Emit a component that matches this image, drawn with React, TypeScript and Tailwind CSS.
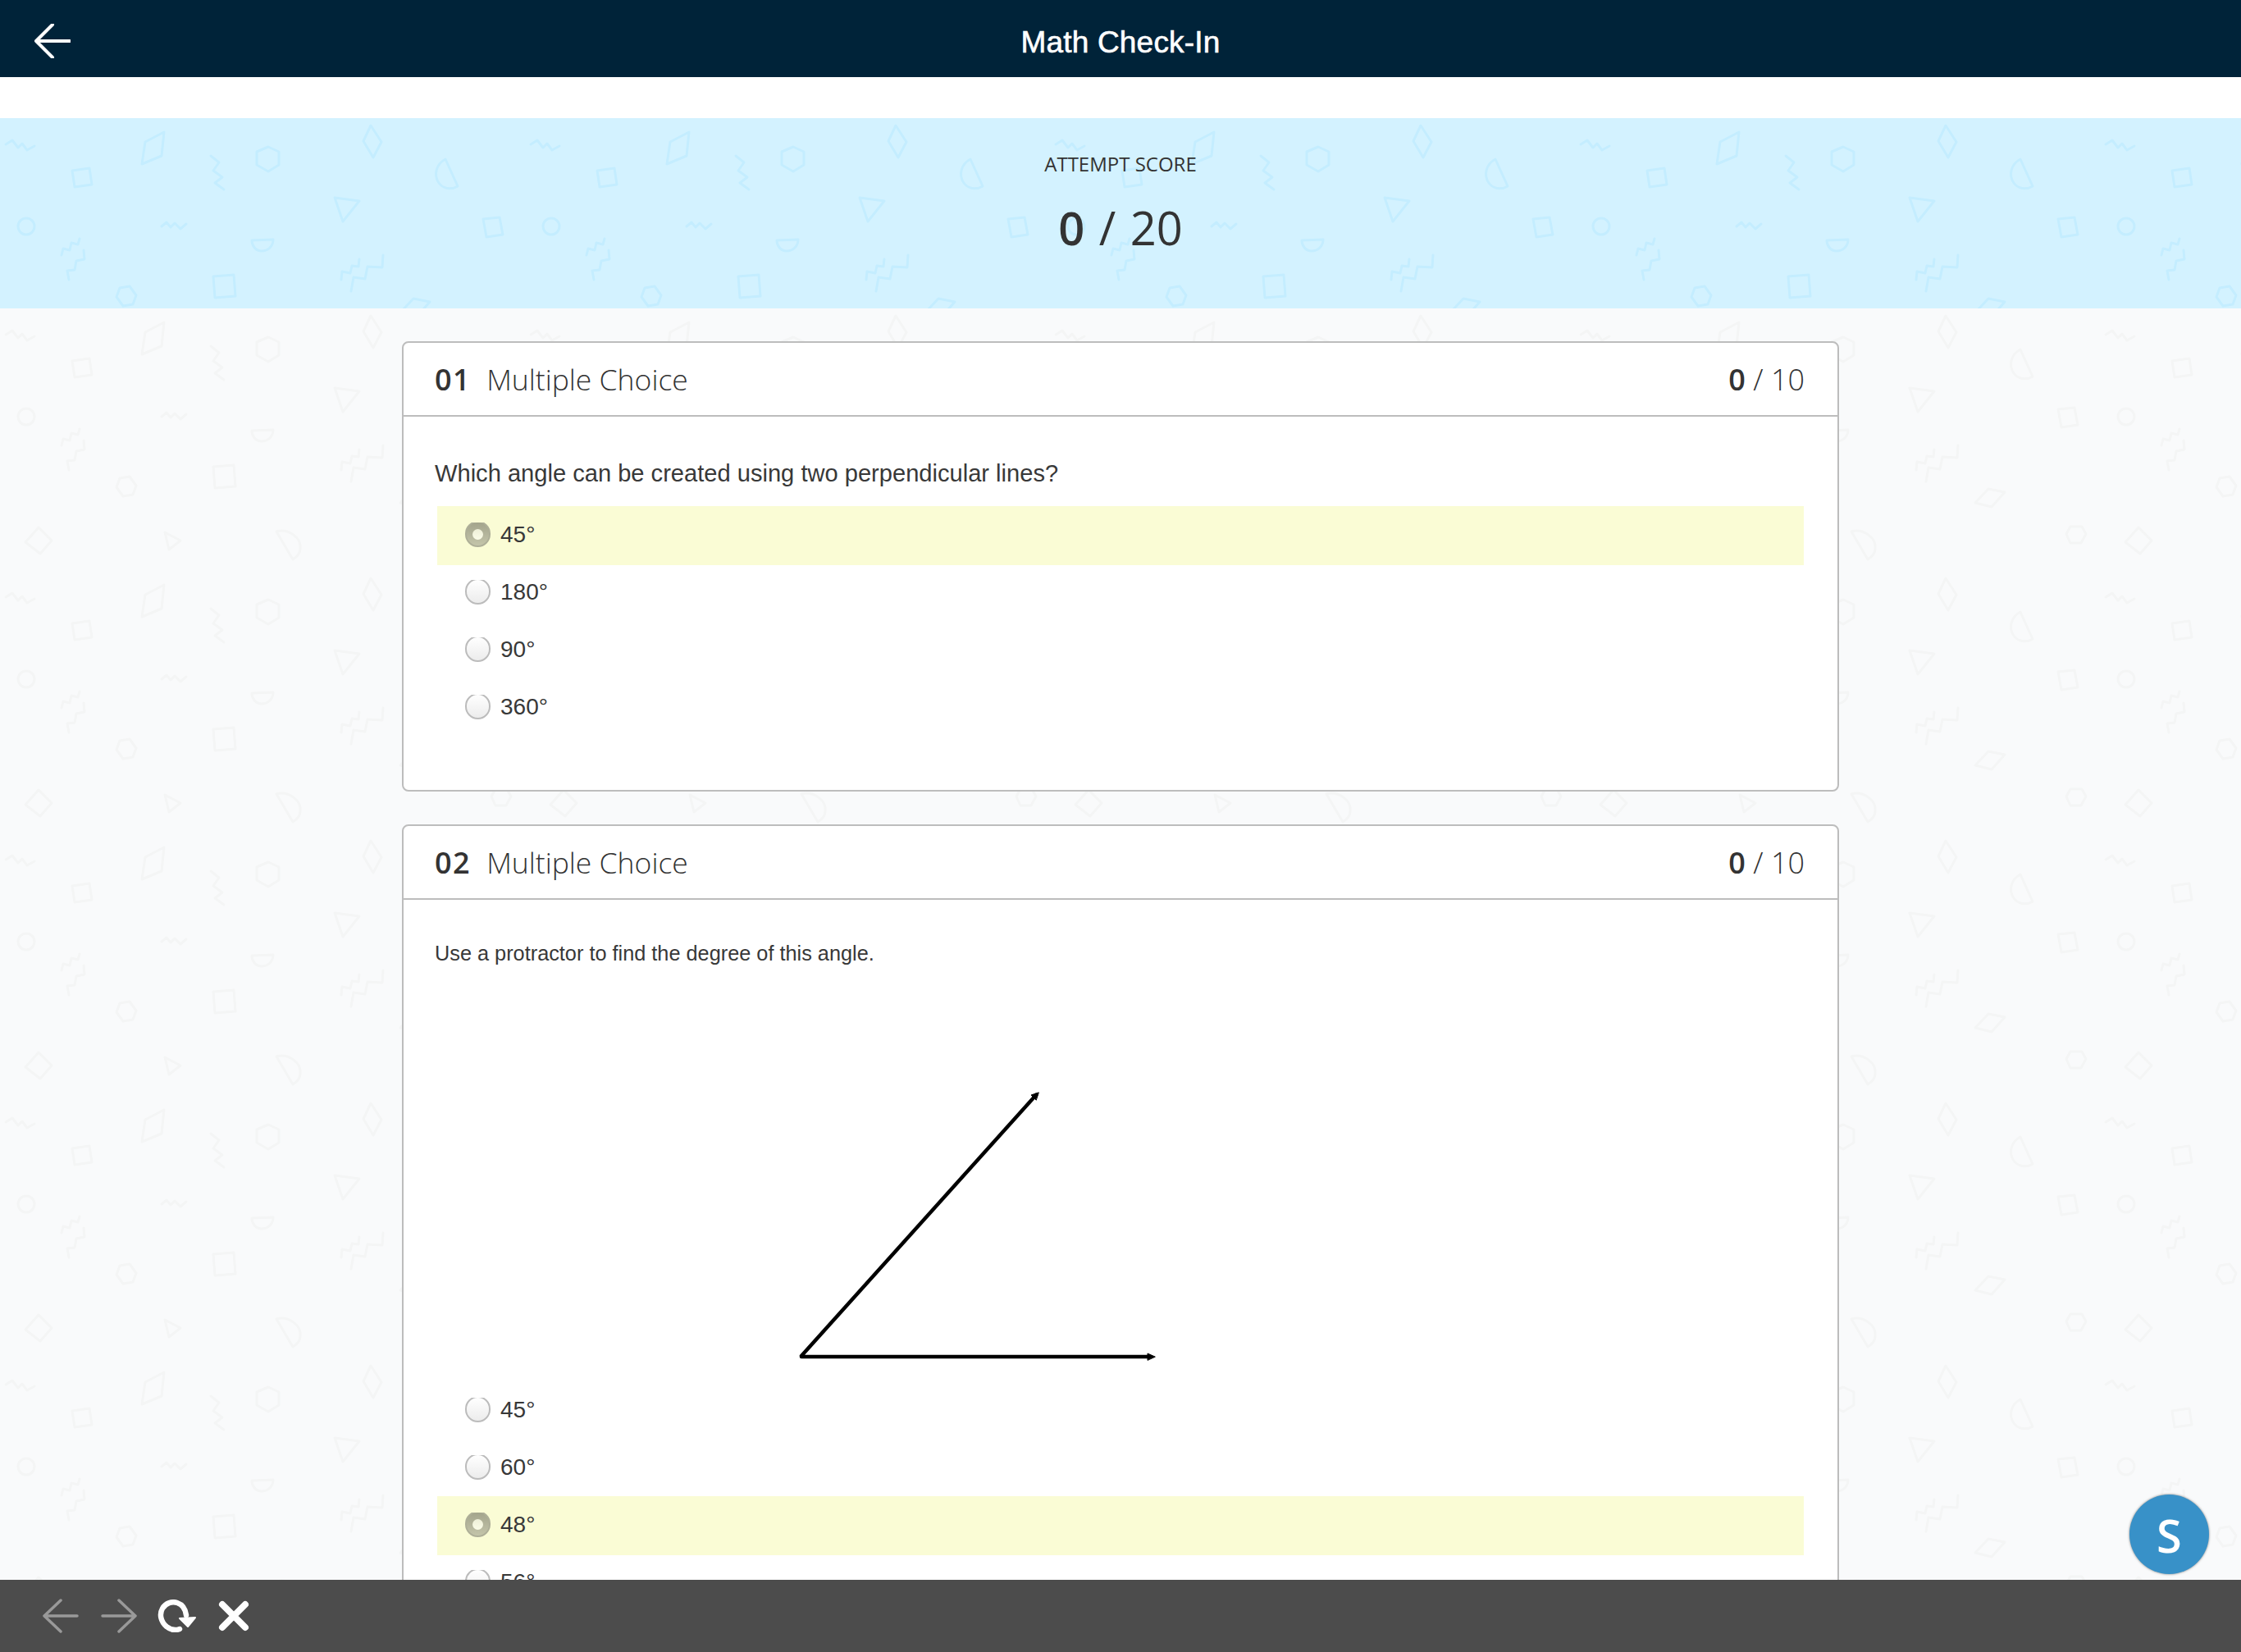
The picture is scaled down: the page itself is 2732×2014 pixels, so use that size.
import React from "react";

const openSans = "font-['Open_Sans',sans-serif]";
const liberation = "font-['Liberation_Sans',Arial,sans-serif]";

const Confetti: React.FC<{ id: string; color: string }> = ({ id, color }) => (
  <svg className="absolute inset-0 w-full h-full" aria-hidden="true">
    <defs>
      <pattern id={id} width="640" height="320" patternUnits="userSpaceOnUse">
        <g fill="none" stroke={color} strokeWidth="3" strokeLinejoin="round" strokeLinecap="round">
          <polyline points="7,32 15,27 22,36 27,31 33,39 42,34" />
          <polygon points="177,29 200,17 197,46 173,56" />
          <polygon points="88,64 109,61 112,81 91,84" />
          <polyline points="257,46 267,54 260,64 271,72 262,79 273,87" />
          <polygon points="327,35 340,41 340,57 327,65 313,57 313,41" />
          <polygon points="452,9 465,29 455,48 443,28" />
          <polygon points="408,97 438,101 418,126" />
          <circle cx="32" cy="132" r="10" />
          <polyline points="197,132 203,127 208,133 213,128 220,135 227,129" />
          <path d="M307 149 L333 148 C333 156 327 162 319 162 C312 162 307 156 307 149 Z" />
          <polyline points="75,167 77,159 85,161 87,152 95,154 97,147" />
          <polyline points="102,161 103,172 93,174 91,185 82,186 84,197" />
          <polygon points="158,205 166,216 162,227 150,229 142,218 146,207" />
          <polygon points="260,193 285,191 287,217 262,219" />
          <polyline points="416,197 417,187 427,189 429,180 437,181 438,172" />
          <polyline points="467,167 466,182 448,181 445,196 431,194 428,211" />
          <polygon points="47,267 63,283 49,299 31,285" />
          <polygon points="201,273 220,283 206,294" />
          <path d="M337 272 C352 268 368 280 366 293 C366 298 362 303 357 306 Z" />
          <path d="M543 50 L558 83 C550 88 540 86 535 79 C528 69 532 56 543 50 Z" />
          <polygon points="589,123 609,121 613,142 593,145" />
          <polygon points="504,220 524,224 508,242 488,237" />
          <polygon points="604,266 618,266 623,275 617,286 604,286 599,275" />
        </g>
      </pattern>
    </defs>
    <rect width="100%" height="100%" fill={`url(#${id})`} />
  </svg>
);

const Radio: React.FC<{ checked?: boolean }> = ({ checked }) => (
  <span className="block w-[31px] h-[30px] overflow-hidden shrink-0">
    {checked ? (
      <span className="flex items-center justify-center w-[31px] h-[32px] -mt-[2px] rounded-full bg-linear-to-b from-[#a3a48c] to-[#c4c5aa] border-2 border-[#aeaf98]">
        <span className="block w-[13px] h-[13px] rounded-full bg-linear-to-b from-[#eeefd8] to-[#fbfce8]" />
      </span>
    ) : (
      <span className="block w-[31px] h-[32px] -mt-[2px] rounded-full bg-linear-to-b from-white to-[#ececec] border-2 border-[#bcbcbc]" />
    )}
  </span>
);

const Option: React.FC<{ label: string; checked?: boolean }> = ({ label, checked }) => (
  <div
    className={
      checked
        ? "flex items-center gap-[12px] h-[72px] -mb-[2px] pb-[2px] ml-[3px] pl-[34px] bg-[#fafcd5]"
        : "flex items-center gap-[12px] h-[70px] ml-[3px] pl-[34px]"
    }
  >
    <Radio checked={checked} />
    <span className={`${liberation} text-[28px] leading-none text-[#383838]`}>{label}</span>
  </div>
);

const QuestionCard: React.FC<{ num: string; children: React.ReactNode }> = ({ num, children }) => (
  <section className="w-[1752px] mx-auto mb-[40px] bg-white border-2 border-[#bdbdbd] rounded-[8px]">
    <div className={`${openSans} flex items-center justify-between h-[90px] pt-[2px] pl-[38px] pr-[40px] border-b-2 border-[#bdbdbd] text-[36px] text-[#333]`}>
      <div className="flex items-center">
        <span className="font-semibold tracking-[1.5px]">{num}</span>
        <span className="ml-[19px] text-[35.5px] font-light">Multiple Choice</span>
      </div>
      <div>
        <span className="font-semibold">0</span>
        <span className="font-light"> / 10</span>
      </div>
    </div>
    <div className="pl-[38px] pr-[41px]">{children}</div>
  </section>
);

const ArrowIcon: React.FC<{ flip?: boolean; color: string; className?: string }> = ({ flip, color, className }) => (
  <svg viewBox="0 0 44 42" className={`${className ?? ""} ${flip ? "-scale-x-100" : ""}`} fill="none" stroke={color} strokeWidth="3.5" strokeLinecap="round" strokeLinejoin="round">
    <path d="M42 21H2M22 2L2 21L22 40" />
  </svg>
);

export default function App() {
  return (
    <div className="flex flex-col w-[2732px] h-[2014px] overflow-hidden bg-white">
      <header className="relative flex items-center justify-center h-[94px] pt-[9px] shrink-0 bg-[#002339]">
        <svg viewBox="0 0 44 42" className="absolute left-[42px] top-[29px] w-[44px] h-[42px]" fill="none" stroke="white" strokeWidth="4" strokeLinecap="round" strokeLinejoin="round">
          <path d="M43 21H2M22 1L2 21L22 41" />
        </svg>
        <h1 className={`${liberation} text-[37px] leading-none tracking-[0.2px] text-white [-webkit-text-stroke:0.6px_white]`}>Math Check-In</h1>
      </header>

      <div className="h-[50px] shrink-0" />

      <div className="relative h-[232px] shrink-0 bg-[#d3f2ff]">
        <Confetti id="band" color="#c4edff" />
        <div className={`${openSans} relative flex flex-col items-center text-[#333]`}>
          <div className="mt-[39px] text-[24px] leading-[34px]">ATTEMPT SCORE</div>
          <div className="mt-[22px] text-[56px] leading-[76px] [word-spacing:3px]">
            <span className="font-semibold">0</span> / 20
          </div>
        </div>
      </div>

      <main className="relative flex-1 min-h-0 overflow-hidden bg-[#f9fafb]">
        <Confetti id="page" color="#f4f5f5" />
        <div className="relative pt-[40px]">
          <QuestionCard num="01">
            <p className={`${liberation} pt-[49px] text-[29.1px] leading-[40px] text-[#383838]`}>
              Which angle can be created using two perpendicular lines?
            </p>
            <div className="mt-[20px] pb-[66px]">
              <Option label="45°" checked />
              <Option label="180°" />
              <Option label="90°" />
              <Option label="360°" />
            </div>
          </QuestionCard>

          <QuestionCard num="02">
            <p className={`${liberation} pt-[45px] text-[25.3px] leading-[40px] text-[#383838]`}>
              Use a protractor to find the degree of this angle.
            </p>
            <svg viewBox="0 0 900 502" className="block w-[900px] h-[502px]" fill="none" stroke="#000" strokeWidth="4.5" strokeLinecap="round">
              <path d="M447 471L733 153M447 472H872" />
              <path d="M736 150L727 153L733 159Z" fill="#000" strokeWidth="1" />
              <path d="M878 472L869 468V476Z" fill="#000" strokeWidth="1" />
            </svg>
            <div className="pb-[40px]">
              <Option label="45°" />
              <Option label="60°" />
              <Option label="48°" checked />
              <Option label="56°" />
            </div>
          </QuestionCard>
        </div>

        <button className={`${openSans} absolute left-[2596px] top-[1446px] flex items-center justify-center w-[97px] h-[97px] rounded-full bg-[#3891c8] text-[56px] leading-none font-semibold text-white shadow-[0_0_3px_rgba(0,0,0,0.5)]`}>
          S
        </button>
      </main>

      <footer className="flex items-center h-[88px] shrink-0 pl-[52px] bg-[#4c4c4c]">
        <ArrowIcon color="#999" className="w-[44px] h-[42px]" />
        <ArrowIcon flip color="#999" className="ml-[27px] w-[44px] h-[42px]" />
        <svg viewBox="0 0 47 40" className="ml-[25px] w-[47px] h-[40px]" fill="none">
          <path d="M27 36C22 38 16 37 11 33C4 27 2 18 6 11C10 4 18 2 24 4C30 6 34 11 35 19" stroke="white" strokeWidth="6.5" strokeLinecap="round" />
          <path d="M27 23L46 22L37 33Z" fill="white" stroke="white" strokeWidth="2" strokeLinejoin="round" />
        </svg>
        <svg viewBox="0 0 38 38" className="ml-[27px] w-[38px] h-[38px]" fill="none" stroke="white" strokeWidth="8" strokeLinecap="round">
          <path d="M5 5L33 33M33 5L5 33" />
        </svg>
      </footer>
    </div>
  );
}
